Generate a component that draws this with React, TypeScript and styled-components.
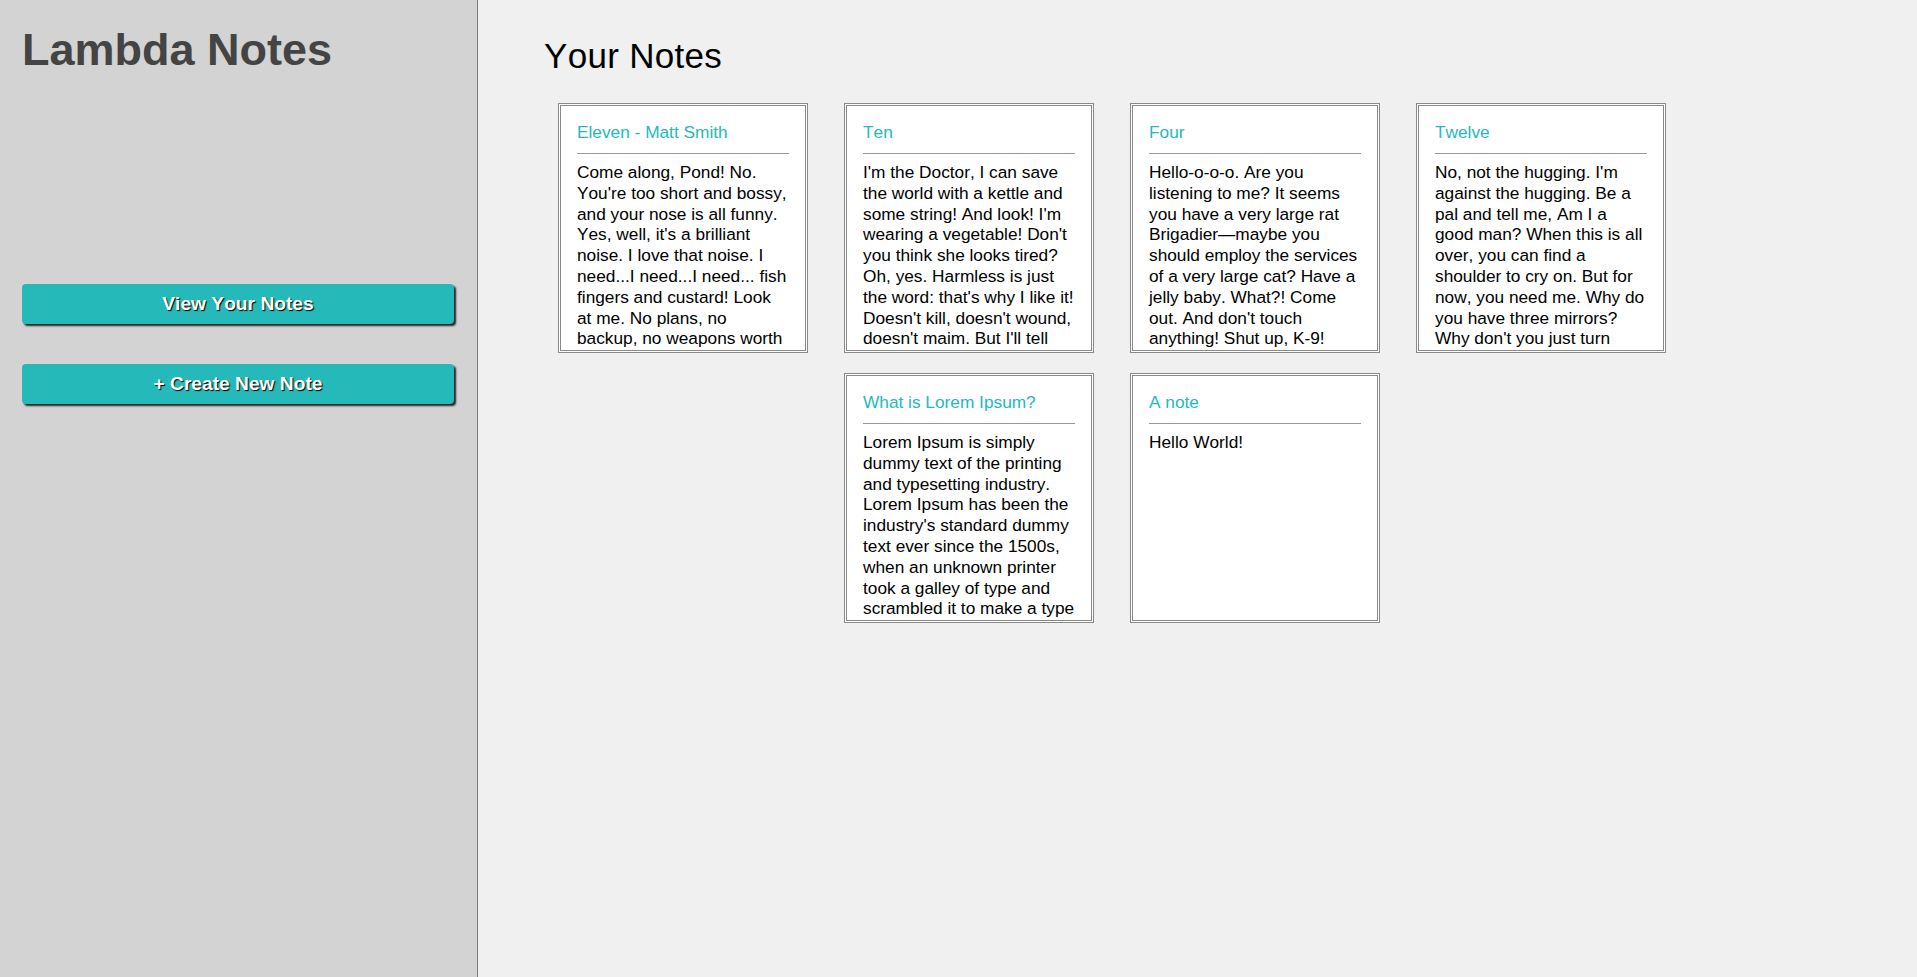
import React from "react";
import styled, { createGlobalStyle } from "styled-components";

const GlobalStyle = createGlobalStyle`
  html, body {
    margin: 0;
    padding: 0;
    height: 100%;
  }
  body {
    font-family: "Liberation Sans", Arial, Helvetica, sans-serif;
    background: #f0f0f0;
    font-kerning: none;
  }
  * { box-sizing: border-box; }
`;

const Layout = styled.div`
  display: flex;
  min-height: 100vh;
  width: 100%;
`;

const Sidebar = styled.aside`
  width: 478px;
  flex-shrink: 0;
  background: #d3d3d3;
  border-right: 1px solid #7a7a7a;
  padding: 24px 23px 0 22px;
  display: flex;
  flex-direction: column;
`;

const Brand = styled.h1`
  margin: 0;
  font-size: 45px;
  line-height: normal;
  font-weight: 700;
  color: #444444;
`;

const NavButton = styled.button<{ $top: number }>`
  margin-top: ${(p) => p.$top}px;
  height: 40px;
  width: 100%;
  border: none;
  border-radius: 4px;
  background: #25b9ba;
  color: #ffffff;
  font-family: "Liberation Sans", Arial, Helvetica, sans-serif;
  font-kerning: none;
  font-weight: 700;
  font-size: 19.2px;
  text-shadow: 1px 1px 1px #000;
  box-shadow: 2px 2px 2px rgba(0, 0, 0, 0.85);
  cursor: pointer;
  padding: 0;
`;

const Main = styled.main`
  flex: 1;
  background: #f0f0f0;
  padding: 36px 0 0 66px;
`;

const PageTitle = styled.h2`
  margin: 0;
  font-size: 35px;
  line-height: normal;
  font-weight: 400;
  color: #000;
  letter-spacing: 0.3px;
`;

const CardGrid = styled.div`
  margin-top: 17px;
  margin-left: -4px;
  width: 1144px;
  display: flex;
  flex-wrap: wrap;
  justify-content: center;
`;

const Card = styled.div`
  width: 250px;
  height: 250px;
  margin: 10px 18px;
  background: #fff;
  border: 3px double #8a8a8a;
  padding: 16px 16px 0 16px;
  overflow: hidden;
`;

const CardTitle = styled.div`
  font-size: 17.28px;
  line-height: normal;
  color: #25b9ba;
  padding-bottom: 10px;
  border-bottom: 1px solid #999;
`;

const CardBody = styled.p`
  margin: 8px 0 0;
  font-size: 17.28px;
  line-height: 20.8px;
  color: #000;
`;

const notes = [
  {
    title: "Eleven - Matt Smith",
    body: "Come along, Pond! No. You're too short and bossy, and your nose is all funny. Yes, well, it's a brilliant noise. I love that noise. I need...I need...I need... fish fingers and custard! Look at me. No plans, no backup, no weapons worth a damn. Oh, and something you need to know about me.",
  },
  {
    title: "Ten",
    body: "I'm the Doctor, I can save the world with a kettle and some string! And look! I'm wearing a vegetable! Don't you think she looks tired? Oh, yes. Harmless is just the word: that's why I like it! Doesn't kill, doesn't wound, doesn't maim. But I'll tell you what it does do.",
  },
  {
    title: "Four",
    body: "Hello-o-o-o. Are you listening to me? It seems you have a very large rat Brigadier\u2014maybe you should employ the services of a very large cat? Have a jelly baby. What?! Come out. And don't touch anything! Shut up, K-9! You're a very naughty dog.",
  },
  {
    title: "Twelve",
    body: "No, not the hugging. I'm against the hugging. Be a pal and tell me, Am I a good man? When this is all over, you can find a shoulder to cry on. But for now, you need me. Why do you have three mirrors? Why don't you just turn around and face the room?",
  },
  {
    title: "What is Lorem Ipsum?",
    body: "Lorem Ipsum is simply dummy text of the printing and typesetting industry. Lorem Ipsum has been the industry's standard dummy text ever since the 1500s, when an unknown printer took a galley of type and scrambled it to make a type specimen book.",
  },
  {
    title: "A note",
    body: "Hello World!",
  },
];

export default function App() {
  return (
    <>
      <GlobalStyle />
      <Layout>
        <Sidebar>
          <Brand>Lambda Notes</Brand>
          <NavButton $top={208}>View Your Notes</NavButton>
          <NavButton $top={40}>+ Create New Note</NavButton>
        </Sidebar>
        <Main>
          <PageTitle>Your Notes</PageTitle>
          <CardGrid>
            {notes.map((n) => (
              <Card key={n.title}>
                <CardTitle>{n.title}</CardTitle>
                <CardBody>{n.body}</CardBody>
              </Card>
            ))}
          </CardGrid>
        </Main>
      </Layout>
    </>
  );
}
